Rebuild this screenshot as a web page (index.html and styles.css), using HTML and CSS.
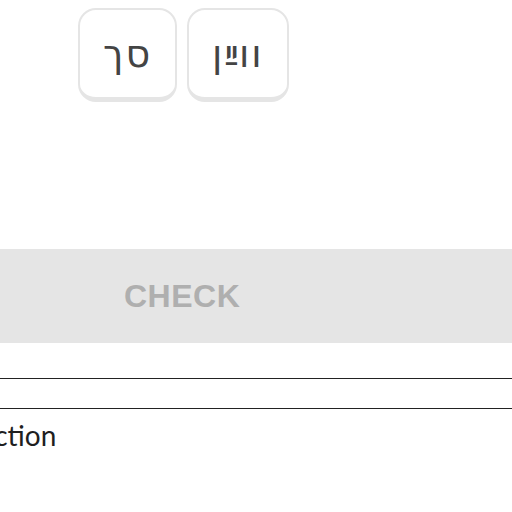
FILE: index.html
```html
<!DOCTYPE html>
<html lang="en">
<head>
  <meta charset="UTF-8" />
  <meta name="viewport" content="width=device-width, initial-scale=1.0"/>
  <title>Word bank</title>
  <link rel="stylesheet" href="styles.css">
</head>
<body>
  <div class="bank">
    <button type="button" class="tile" lang="yi">סך</button>
    <button type="button" class="tile" lang="yi">ווײַן</button>
  </div>

  <div class="footer">
    <button type="button" class="check" disabled>CHECK</button>
  </div>

  <div class="rule"></div>
  <h2 class="section-title">Instruction</h2>
</body>
</html>
```

FILE: styles.css
```css
html, body {
  margin: 0;
  background: #ffffff;
  overflow: hidden;
}
body {
  font-family: "Liberation Sans", Arial, sans-serif;
  width: 512px;
}
.bank {
  display: flex;
  gap: 10px;
  padding: 8px 0 0 78px;
}
.tile {
  box-sizing: border-box;
  height: 94px;
  min-width: 97px;
  padding: 0 23px;
  background: #ffffff;
  border: 2px solid #e5e5e5;
  border-bottom-width: 5px;
  border-radius: 18px;
  font-family: "DejaVu Sans", sans-serif;
  font-size: 38px;
  letter-spacing: 2px;
  color: #444444;
  display: flex;
  align-items: center;
  justify-content: center;
  cursor: pointer;
}
.footer {
  margin-top: 147px;
}
.check {
  display: block;
  width: 100%;
  height: 94px;
  border: none;
  background: #e5e5e5;
  color: #afafaf;
  font-family: "Liberation Sans", Arial, sans-serif;
  font-weight: bold;
  font-size: 32px;
  letter-spacing: 0.5px;
  text-align: left;
  padding: 0 0 0 124px;
}
.rule {
  margin-top: 35px;
  height: 29px;
  border-top: 1px solid #222222;
  border-bottom: 1px solid #222222;
}
.section-title {
  margin: 9px 0 0 -77px;
  font-family: Lato, sans-serif;
  font-weight: normal;
  font-size: 28px;
  color: #1f1f1f;
}
```
